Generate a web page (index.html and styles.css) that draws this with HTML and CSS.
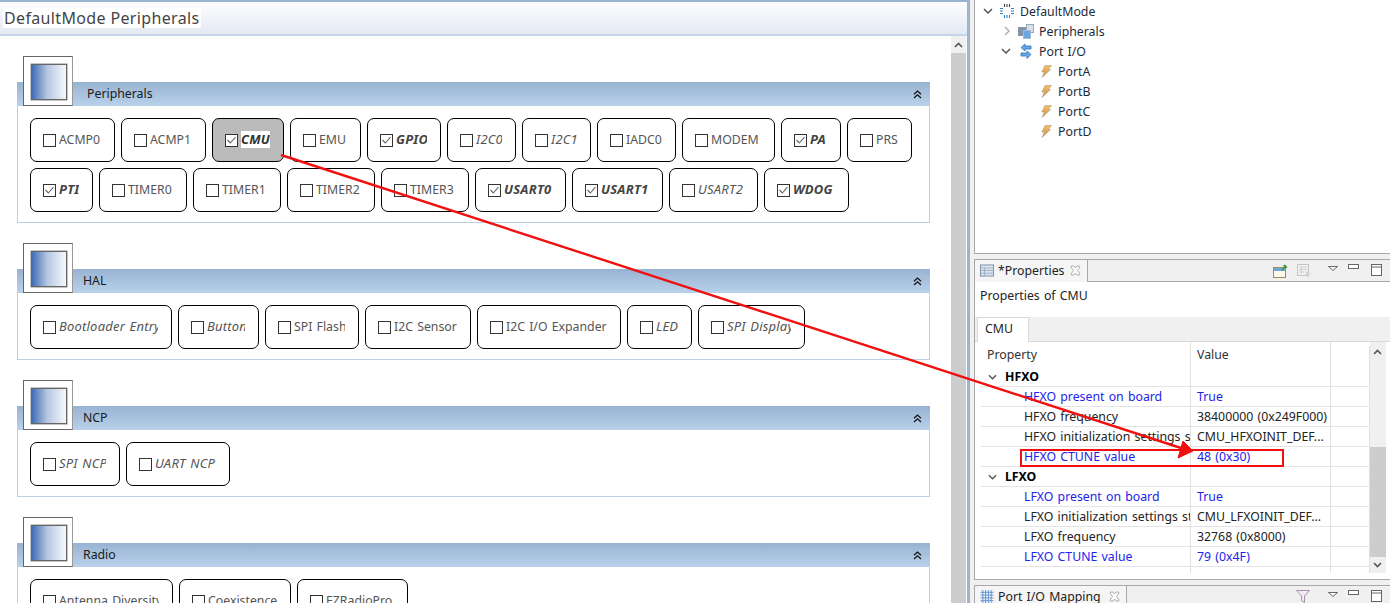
FILE: index.html
```html
<!DOCTYPE html>
<html lang="en">
<head>
<meta charset="utf-8">
<title>DefaultMode Peripherals</title>
<link rel="stylesheet" href="styles.css">
</head>
<body>
<svg class="defs" width="0" height="0" aria-hidden="true">
  <defs>
    <linearGradient id="boltGrad" x1="0" y1="0" x2="0" y2="1">
      <stop offset="0" stop-color="#f8c060"/><stop offset="1" stop-color="#c98a50"/>
    </linearGradient>
    <symbol id="bolt" viewBox="0 0 11 13">
      <path d="M4 0.5H10.5L7 4.5H9.5L1 12.5L3.5 7H0.8Z" fill="url(#boltGrad)" stroke="#a89a80" stroke-width=".6"/>
    </symbol>
    <symbol id="cdown" viewBox="0 0 10 6">
      <path d="M1 1L5 5L9 1" fill="none" stroke="#555" stroke-width="1.5"/>
    </symbol>
    <symbol id="cright" viewBox="0 0 6 10">
      <path d="M1 1L5 5L1 9" fill="none" stroke="#b0b0b0" stroke-width="1.5"/>
    </symbol>
    <symbol id="collapse" viewBox="0 0 9 9">
      <path d="M1 4.2L4.5 1L8 4.2M1 8L4.5 4.8L8 8" fill="none" stroke="#111" stroke-width="1.2"/>
    </symbol>
    <symbol id="close" viewBox="0 0 11 11">
      <path d="M1.5 1H4L5.5 3L7 1H9.5L10 2L7.5 5.5L10 9L9.5 10H7L5.5 8L4 10H1.5L1 9L3.5 5.5L1 2Z" fill="#fff" stroke="#999" stroke-width=".8"/>
    </symbol>
    <symbol id="menu" viewBox="0 0 10 5">
      <path d="M0.5 0.5H9.5L5 4.5Z" fill="#fff" stroke="#666"/>
    </symbol>
    <symbol id="min" viewBox="0 0 11 5">
      <rect x=".5" y=".5" width="10" height="4" fill="#fff" stroke="#666"/>
    </symbol>
    <symbol id="max" viewBox="0 0 11 12">
      <rect x=".5" y=".5" width="10" height="11" fill="#fff" stroke="#666"/>
      <path d="M.5 3H10.5" stroke="#666"/>
    </symbol>
    <symbol id="up" viewBox="0 0 9 6">
      <path d="M1 5L4.5 1.5L8 5" fill="none" stroke="#555" stroke-width="1.6"/>
    </symbol>
    <symbol id="down" viewBox="0 0 9 6">
      <path d="M1 1L4.5 4.5L8 1" fill="none" stroke="#555" stroke-width="1.6"/>
    </symbol>
    <symbol id="tick" viewBox="0 0 13 13">
      <path d="M2.5 6L5.3 9L10.5 3.2" fill="none" stroke="#666" stroke-width="1.1"/>
    </symbol>
  </defs>
</svg>

<div class="app">
  <main class="editor">
    <header class="editor-title"><h1 class="editor-title-text">DefaultMode Peripherals</h1></header>
    <div class="editor-body">
      <div class="canvas">

        <section class="group">
          <div class="group-icon"><span class="group-icon-inner"></span></div>
          <div class="group-bar group-bar-wide"><span class="group-name">Peripherals</span><svg class="collapse"><use href="#collapse"/></svg></div>
          <div class="group-body">
            <div class="btn w85"><span class="cb"></span><span class="lbl">ACMP0</span></div>
            <div class="btn w85"><span class="cb"></span><span class="lbl">ACMP1</span></div>
            <div class="btn w72 sel"><span class="cb"><svg class="tick"><use href="#tick"/></svg></span><span class="lbl on">CMU</span></div>
            <div class="btn w71"><span class="cb"></span><span class="lbl">EMU</span></div>
            <div class="btn w74"><span class="cb"><svg class="tick"><use href="#tick"/></svg></span><span class="lbl on">GPIO</span></div>
            <div class="btn w69"><span class="cb"></span><span class="lbl it">I2C0</span></div>
            <div class="btn w69"><span class="cb"></span><span class="lbl it">I2C1</span></div>
            <div class="btn w79"><span class="cb"></span><span class="lbl">IADC0</span></div>
            <div class="btn w93"><span class="cb"></span><span class="lbl">MODEM</span></div>
            <div class="btn w60"><span class="cb"><svg class="tick"><use href="#tick"/></svg></span><span class="lbl on">PA</span></div>
            <div class="btn w65"><span class="cb"></span><span class="lbl">PRS</span></div>
            <div class="btn w63"><span class="cb"><svg class="tick"><use href="#tick"/></svg></span><span class="lbl on">PTI</span></div>
            <div class="btn w88"><span class="cb"></span><span class="lbl">TIMER0</span></div>
            <div class="btn w88"><span class="cb"></span><span class="lbl">TIMER1</span></div>
            <div class="btn w88"><span class="cb"></span><span class="lbl">TIMER2</span></div>
            <div class="btn w88"><span class="cb"></span><span class="lbl">TIMER3</span></div>
            <div class="btn w91"><span class="cb"><svg class="tick"><use href="#tick"/></svg></span><span class="lbl on">USART0</span></div>
            <div class="btn w91"><span class="cb"><svg class="tick"><use href="#tick"/></svg></span><span class="lbl on">USART1</span></div>
            <div class="btn w89"><span class="cb"></span><span class="lbl it">USART2</span></div>
            <div class="btn w85"><span class="cb"><svg class="tick"><use href="#tick"/></svg></span><span class="lbl on">WDOG</span></div>
          </div>
        </section>

        <section class="group">
          <div class="group-icon"><span class="group-icon-inner"></span></div>
          <div class="group-bar"><span class="group-name">HAL</span><svg class="collapse"><use href="#collapse"/></svg></div>
          <div class="group-body">
            <div class="btn w142"><span class="cb"></span><span class="lbl it">Bootloader Entry</span></div>
            <div class="btn w81"><span class="cb"></span><span class="lbl it">Button</span></div>
            <div class="btn w94"><span class="cb"></span><span class="lbl">SPI Flash</span></div>
            <div class="btn w106"><span class="cb"></span><span class="lbl">I2C Sensor</span></div>
            <div class="btn w144"><span class="cb"></span><span class="lbl">I2C I/O Expander</span></div>
            <div class="btn w65"><span class="cb"></span><span class="lbl it">LED</span></div>
            <div class="btn w107"><span class="cb"></span><span class="lbl it">SPI Display</span></div>
          </div>
        </section>

        <section class="group">
          <div class="group-icon"><span class="group-icon-inner"></span></div>
          <div class="group-bar"><span class="group-name">NCP</span><svg class="collapse"><use href="#collapse"/></svg></div>
          <div class="group-body">
            <div class="btn w90"><span class="cb"></span><span class="lbl it">SPI NCP</span></div>
            <div class="btn w104"><span class="cb"></span><span class="lbl it">UART NCP</span></div>
          </div>
        </section>

        <section class="group">
          <div class="group-icon"><span class="group-icon-inner"></span></div>
          <div class="group-bar"><span class="group-name">Radio</span><svg class="collapse"><use href="#collapse"/></svg></div>
          <div class="group-body">
            <div class="btn w143"><span class="cb"></span><span class="lbl">Antenna Diversity</span></div>
            <div class="btn w112"><span class="cb"></span><span class="lbl">Coexistence</span></div>
            <div class="btn w111"><span class="cb"></span><span class="lbl">EZRadioPro</span></div>
          </div>
        </section>

      </div>
      <div class="vscroll">
        <div class="vscroll-btn"><svg class="arrow"><use href="#up"/></svg></div>
        <div class="vscroll-thumb"></div>
      </div>
    </div>
  </main>

  <aside class="side">
    <div class="outline">
      <div class="tree-row"><svg class="tw"><use href="#cdown"/></svg>
        <svg class="ti" viewBox="0 0 16 16">
          <path d="M1 5.5H4M1 8H4M1 10.5H4M12 5.5H15M12 8H15M12 10.5H15M5.5 12V15M8 12V15M10.5 12V15" fill="none" stroke="#2f7fc8" stroke-width="1.1"/>
          <path d="M5.5 1V4M8 1V4M10.5 1V4" stroke="#444" stroke-width="1.1" fill="none"/>
        </svg>
        <span>DefaultMode</span></div>
      <div class="tree-row lv1"><svg class="tw tw-r"><use href="#cright"/></svg>
        <svg class="ti" viewBox="0 0 16 16">
          <rect x="8.5" y="1.5" width="7" height="8" fill="#d6e0ec" stroke="#9aa8b8"/>
          <rect x=".5" y="4.5" width="7" height="8" fill="#7f93ad" stroke="#8b97a8"/>
          <rect x="5.5" y="7.5" width="7" height="8" fill="#6aa6e4" stroke="#a8bace"/>
        </svg>
        <span>Peripherals</span></div>
      <div class="tree-row lv1"><svg class="tw tw-d"><use href="#cdown"/></svg>
        <svg class="ti" viewBox="0 0 16 16">
          <path d="M7 1L3 4.5L7 8V6H13V3H7ZM9 8L13 11.5L9 15.5V13H3V10H9Z" fill="#6aa8e6" stroke="#2a6fc0" stroke-width=".8"/>
        </svg>
        <span>Port I/O</span></div>
      <div class="tree-row lv2"><svg class="bolt"><use href="#bolt"/></svg><span>PortA</span></div>
      <div class="tree-row lv2"><svg class="bolt"><use href="#bolt"/></svg><span>PortB</span></div>
      <div class="tree-row lv2"><svg class="bolt"><use href="#bolt"/></svg><span>PortC</span></div>
      <div class="tree-row lv2"><svg class="bolt"><use href="#bolt"/></svg><span>PortD</span></div>
    </div>

    <div class="view view-props">
      <div class="view-head">
        <div class="view-tab view-tab-props">
          <svg class="tab-icon" viewBox="0 0 14 12">
            <rect x=".5" y=".5" width="13" height="11" fill="#dfe8f2" stroke="#7f8fa3"/>
            <path d="M.5 3.5H13.5M.5 6H13.5M.5 8.7H13.5M4.5 3.5V11.5" stroke="#9fb0c4" fill="none"/>
          </svg>
          <span>*Properties</span>
          <svg class="tab-close"><use href="#close"/></svg>
        </div>
        <div class="view-tools">
          <svg class="tool-pin" viewBox="0 0 15 14">
            <rect x=".5" y="3.5" width="12" height="10" fill="#fdf8ea" stroke="#a08a60"/>
            <rect x="1" y="4" width="11" height="3" fill="#6fa8dc"/>
            <path d="M8 6L11 3L10 1.5L12 .5L14.5 3L13 4.5L12 4L9 7Z" fill="#3f9a3f"/>
          </svg>
          <svg class="tool-dis" viewBox="0 0 15 14">
            <rect x=".5" y=".5" width="11" height="11" fill="#f2f2f2" stroke="#c4c4c4"/>
            <path d="M2 3H10M2 5.5H10M2 8H7M4.5 3V10" stroke="#cfcfcf" fill="none"/>
            <path d="M8 7L14 10L11.5 11L12 13.5L10 13Z" fill="#d4d4d4"/>
          </svg>
          <svg class="tool-menu"><use href="#menu"/></svg>
          <svg class="tool-min"><use href="#min"/></svg>
          <svg class="tool-max"><use href="#max"/></svg>
        </div>
      </div>
      <div class="props-desc">Properties of CMU</div>
      <div class="props-tabs"><div class="props-tab">CMU</div></div>
      <div class="props-pane">
        <div class="props-table">
          <div class="tr th"><div class="td">Property</div><div class="td val">Value</div><div class="td"></div></div>
          <div class="tr"><div class="td grp"><svg class="tw-grp"><use href="#cdown"/></svg><b>HFXO</b></div><div class="td"></div><div class="td"></div></div>
          <div class="tr blue"><div class="td key">HFXO present on board</div><div class="td val">True</div><div class="td"></div></div>
          <div class="tr"><div class="td key">HFXO frequency</div><div class="td val">38400000 (0x249F000)</div><div class="td"></div></div>
          <div class="tr"><div class="td key">HFXO initialization settings st</div><div class="td val">CMU_HFXOINIT_DEF...</div><div class="td"></div></div>
          <div class="tr blue"><div class="td key">HFXO CTUNE value</div><div class="td val">48 (0x30)</div><div class="td"></div></div>
          <div class="tr"><div class="td grp"><svg class="tw-grp"><use href="#cdown"/></svg><b>LFXO</b></div><div class="td"></div><div class="td"></div></div>
          <div class="tr blue"><div class="td key">LFXO present on board</div><div class="td val">True</div><div class="td"></div></div>
          <div class="tr"><div class="td key">LFXO initialization settings st</div><div class="td val">CMU_LFXOINIT_DEF...</div><div class="td"></div></div>
          <div class="tr"><div class="td key">LFXO frequency</div><div class="td val">32768 (0x8000)</div><div class="td"></div></div>
          <div class="tr blue"><div class="td key">LFXO CTUNE value</div><div class="td val">79 (0x4F)</div><div class="td"></div></div>
          <div class="tr tr-end"><div class="td"></div><div class="td"></div><div class="td"></div></div>
        </div>
        <div class="pscroll">
          <div class="pscroll-top"><svg class="arrow"><use href="#up"/></svg></div>
          <div class="pscroll-thumb"></div>
          <div class="pscroll-bot"><svg class="arrow"><use href="#down"/></svg></div>
        </div>
      </div>
    </div>

    <div class="view view-port">
      <div class="view-head">
        <div class="view-tab view-tab-port">
          <svg class="tab-icon" viewBox="0 0 14 14">
            <path d="M0 2.5H14M0 5.5H14M0 8.5H14M0 11.5H14M2.5 0V14M5.5 0V14M8.5 0V14M11.5 0V14" stroke="#5b8fd0" fill="none"/>
          </svg>
          <span>Port I/O Mapping</span>
          <svg class="tab-close"><use href="#close"/></svg>
        </div>
        <div class="view-tools">
          <svg class="tool-filter" viewBox="0 0 14 13">
            <path d="M.5 .5H13.5L8.5 6V12.5L5.5 10.5V6Z" fill="#f0e8f2" stroke="#a892b0"/>
          </svg>
          <svg class="tool-menu"><use href="#menu"/></svg>
          <svg class="tool-min"><use href="#min"/></svg>
          <svg class="tool-max"><use href="#max"/></svg>
        </div>
      </div>
    </div>
  </aside>
</div>

<div class="callout-box"></div>
<svg class="callout-arrow" viewBox="0 0 1390 603" width="1390" height="603" aria-hidden="true">
  <path d="M281 155L1184 449" fill="none" stroke="#f01010" stroke-width="2.4"/>
  <path d="M1193 451L1178 458L1183 441Z" fill="#f01010" stroke="#f01010"/>
</svg>
</body>
</html>
```

FILE: styles.css
```css
* { box-sizing: border-box; }

html, body {
  margin: 0;
  height: 603px;
  overflow: hidden;
}

body {
  font-family: "Noto Sans", "Open Sans", sans-serif;
  font-size: 12.3px;
  word-spacing: 1px;
  color: #222;
  background: #f0f0f0;
  position: relative;
}

.defs { position: absolute; }

.app {
  display: flex;
  height: 603px;
}

/* Editor */
.editor {
  width: 970px;
  flex: none;
  display: flex;
  flex-direction: column;
  background: #fff;
  border-top: 2px solid #9ab3d1;
  border-right: 3px solid #9ab3d1;
}

.editor-title {
  height: 34px;
  flex: none;
  display: flex;
  align-items: center;
  padding: 0 0 0 3px;
  background: linear-gradient(#fdfdfe, #e3e9f2);
  border-bottom: 2px solid #c7d6e6;
}

.editor-title-text {
  margin: 0;
  padding: 0 1px;
  height: 20px;
  line-height: 20px;
  font-size: 16px;
  font-weight: 400;
  letter-spacing: .35px;
  word-spacing: 0;
  color: #444;
  background: #fff;
}

.editor-body {
  flex: 1;
  display: flex;
  min-height: 0;
  padding-right: 1px;
}

.canvas {
  flex: 1;
  min-width: 0;
  overflow: hidden;
  padding: 20px 0 0 17px;
}

.group {
  position: relative;
  width: 913px;
  padding-top: 26px;
  margin-bottom: 20px;
}

.group-icon {
  position: absolute;
  top: 0;
  left: 6px;
  width: 50px;
  height: 50px;
  padding: 7px;
  background: #fff;
  border: 1px solid #666;
  border-right-color: #999;
}

.group-icon-inner {
  display: block;
  width: 36px;
  height: 36px;
  background: linear-gradient(90deg, #3f6db5, #b5c7e2 45%, #f6f8fc);
  border: 1px solid #666;
  box-shadow: 0 0 0 .5px #888;
}

.group-bar {
  height: 24px;
  display: flex;
  align-items: center;
  justify-content: space-between;
  padding: 0 8px 0 66px;
  background: linear-gradient(#98b3d2, #b9d1ea);
  color: #1a1a1a;
}

.group-bar-wide { padding-left: 70px; }

.group-name { margin-bottom: 2px; }

.collapse {
  width: 9px;
  height: 9px;
}

.group-body {
  display: flex;
  flex-wrap: wrap;
  gap: 6px;
  padding: 12px 12px 10px;
  background: #fff;
  border: 1px solid #b9d1e8;
  border-top: 0;
}

/* Peripheral buttons */
.btn {
  height: 44px;
  display: flex;
  align-items: center;
  gap: 3px;
  padding: 0 13px 0 12px;
  background: #fff;
  border: 1px solid #000;
  border-radius: 7px;
}

.sel { background: #bbb; }

.w60 { width: 60px; } .w63 { width: 63px; } .w65 { width: 65px; } .w69 { width: 69px; }
.w71 { width: 71px; } .w72 { width: 72px; } .w74 { width: 74px; } .w79 { width: 79px; }
.w81 { width: 81px; } .w85 { width: 85px; } .w88 { width: 88px; } .w89 { width: 89px; }
.w90 { width: 90px; } .w91 { width: 91px; } .w93 { width: 93px; } .w94 { width: 94px; }
.w104 { width: 104px; } .w106 { width: 106px; } .w107 { width: 107px; }
.w111 { width: 111px; } .w112 { width: 112px; } .w142 { width: 142px; }
.w143 { width: 143px; } .w144 { width: 144px; }

.cb {
  width: 13px;
  height: 13px;
  flex: none;
  background: #fff;
  border: 1px solid #333;
  position: relative;
}

.tick {
  position: absolute;
  top: -1px;
  left: -1px;
  width: 13px;
  height: 13px;
}

.lbl {
  flex: 1;
  min-width: 0;
  overflow: hidden;
  white-space: nowrap;
  color: #555;
  line-height: 17px;
  margin-bottom: 2px;
}

.it {
  font-style: italic;
  font-size: 13px;
  letter-spacing: .2px;
}

.on {
  font-style: italic;
  font-weight: 700;
  font-size: 13px;
  letter-spacing: .2px;
  color: #444;
}

.sel .lbl {
  background: #fff;
  color: #333;
}

/* Editor scrollbar */
.vscroll {
  width: 15px;
  flex: none;
  display: flex;
  flex-direction: column;
}

.vscroll-btn {
  height: 17px;
  flex: none;
  display: flex;
  align-items: center;
  justify-content: center;
  background: #f0f0f0;
}

.arrow {
  width: 9px;
  height: 6px;
}

.vscroll-thumb {
  flex: 1;
  background: #cdcdcd;
}

/* Right column */
.side {
  flex: 1;
  min-width: 0;
  display: flex;
  flex-direction: column;
  padding-left: 4px;
}

.outline {
  height: 254px;
  flex: none;
  padding-top: 1px;
  background: #fff;
  border-left: 1px solid #a8a8a8;
  border-bottom: 1px solid #a8a8a8;
}

.tree-row {
  height: 20px;
  display: flex;
  align-items: center;
  white-space: nowrap;
  color: #1d2a3a;
}

.tree-row .tw {
  width: 10px;
  height: 6px;
  margin-left: 8px;
}

.tree-row .ti {
  width: 16px;
  height: 16px;
  margin: 0 5px 0 6px;
}

.lv1 { padding-left: 18px; }
.lv1 .tw-r { width: 6px; height: 10px; margin: 0 2px 0 11px; }
.lv1 .tw-d { margin-right: 1px; }
.lv2 { padding-left: 66px; }

.bolt {
  width: 11px;
  height: 13px;
  margin-right: 6px;
}

.view {
  background: #fff;
  border-left: 1px solid #a8a8a8;
  margin-top: 5px;
}

.view-props {
  height: 321px;
  flex: none;
  border-bottom: 1px solid #a8a8a8;
}

.view-port {
  flex: 1;
  min-height: 0;
}

.view-head {
  height: 23px;
  display: flex;
  justify-content: space-between;
  background: #f0f0f0;
  border-bottom: 1px solid #a8a8a8;
  border-top: 1px solid #a8a8a8;
}

.view-tab {
  display: flex;
  align-items: center;
  height: 22px;
  padding: 0 0 2px 5px;
  background: #f5f5f5;
  border-right: 1px solid #a8a8a8;
  border-radius: 3px 0 0 0;
  color: #222;
  white-space: nowrap;
}

.view-tab-props { width: 113px; }
.view-tab-port { width: 152px; }

.tab-icon {
  width: 14px;
  height: 13px;
  margin-right: 4px;
  flex: none;
}

.tab-close {
  width: 11px;
  height: 11px;
  margin-left: auto;
  margin-right: 6px;
  flex: none;
}

.view-tools {
  display: flex;
  align-items: flex-start;
  padding: 4px 8px 0 0;
}

.tool-pin { width: 15px; height: 14px; margin-right: 9px; }
.tool-dis { width: 15px; height: 14px; margin-right: 16px; }
.tool-filter { width: 14px; height: 13px; margin-right: 18px; }
.tool-menu { width: 10px; height: 5px; margin: 2px 10px 0 0; }
.tool-min { width: 11px; height: 5px; margin-right: 12px; }
.tool-max { width: 11px; height: 12px; }

.props-desc {
  height: 35px;
  padding: 5px 0 0 5px;
  line-height: 17px;
  color: #222;
}

.props-tabs {
  height: 25px;
  padding-left: 2px;
  background: #f0f0f0;
  border-bottom: 1px solid #d8d8d8;
}

.props-tab {
  width: 52px;
  height: 25px;
  padding: 2px 0 0 7px;
  background: #fff;
  border: 1px solid #d8d8d8;
  border-bottom: 0;
  line-height: 17px;
}

.props-pane {
  display: flex;
  padding-left: 6px;
}

.props-table {
  width: 389px;
  flex: none;
}

.tr {
  display: grid;
  grid-template-columns: 210px 140px 39px;
  height: 20px;
  border-bottom: 1px solid #e4e4e4;
  line-height: 19px;
  color: #222;
}

.th {
  height: 25px;
  border-bottom: 0;
  padding-top: 4px;
  line-height: 18px;
  color: #333;
  background: linear-gradient(90deg, transparent 209px, #e0e0e0 209px, #e0e0e0 210px, transparent 210px, transparent 349px, #e0e0e0 349px, #e0e0e0 350px, transparent 350px);
}

.tr-end {
  height: 6px;
  border-bottom: 0;
}

.blue { color: #2222ee; }

.td {
  min-width: 0;
  overflow: hidden;
  white-space: nowrap;
  border-right: 1px solid #e0e0e0;
}

.th .td { height: 21px; }
.th .td:first-child { padding-left: 6px; }
.key { padding-left: 43px; }
.val { padding-left: 6px; }

.grp {
  display: flex;
  align-items: center;
  padding-left: 7px;
  color: #000;
}

.tw-grp {
  width: 9px;
  height: 6px;
  margin-right: 8px;
}

.pscroll {
  width: 16px;
  flex: none;
  display: flex;
  flex-direction: column;
  background: #f0f0f0;
  height: 231px;
}

.pscroll-top {
  height: 105px;
  flex: none;
  padding: 7px 0 0 3px;
  line-height: 0;
}

.pscroll-thumb {
  height: 110px;
  flex: none;
  background: #cdcdcd;
}

.pscroll-bot {
  flex: 1;
  padding: 5px 0 0 3px;
  line-height: 0;
}

/* Annotation overlay */
.callout-box {
  position: absolute;
  left: 1020px;
  top: 449px;
  width: 264px;
  height: 18px;
  border: 2px solid #f01010;
}

.callout-arrow {
  position: absolute;
  left: 0;
  top: 0;
  pointer-events: none;
}
```
